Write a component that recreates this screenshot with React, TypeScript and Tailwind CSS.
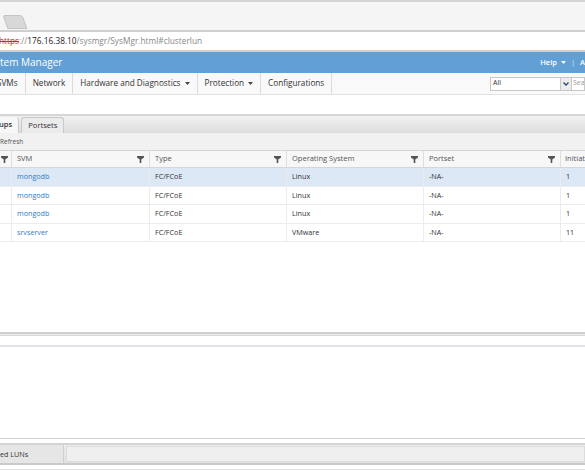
import React from 'react';

const font = { fontFamily: '"Open Sans", "Noto Sans", sans-serif' };

const Filter = () => (
  <svg width="7" height="7" viewBox="0 0 7 7" className="shrink-0">
    <path d="M0 0 H7 V1.5 L4.3 3.5 V7 H2.7 V3.5 L0 1.5 Z" fill="#555" />
  </svg>
);

const Caret = ({ color = '#444' }: { color?: string }) => (
  <svg width="5" height="3" viewBox="0 0 5 3" className="ml-[4px] inline-block">
    <path d="M0 0 H5 L2.5 3 Z" fill={color} />
  </svg>
);

const rows = [
  { svm: 'mongodb', os: 'Linux', init: '1', selected: true },
  { svm: 'mongodb', os: 'Linux', init: '1' },
  { svm: 'mongodb', os: 'Linux', init: '1' },
  { svm: 'srvserver', os: 'VMware', init: '11' },
];

const cols = [
  { label: '', w: 'w-[12px]' },
  { label: 'SVM', w: 'w-[138px]' },
  { label: 'Type', w: 'w-[137px]' },
  { label: 'Operating System', w: 'w-[137px]' },
  { label: 'Portset', w: 'w-[137px]' },
];

const navItems = ['Network', 'Hardware and Diagnostics', 'Protection', 'Configurations'];

export default function App() {
  return (
    <div className="w-[585px] h-[470px] overflow-hidden bg-white flex flex-col text-[#333]" style={font}>
      {/* browser tab strip */}
      <div className="h-[32px] shrink-0 bg-[#f5f5f5] border-t-2 border-[#d4d4d4] border-b-2 border-b-[#cfcfcf] flex items-end">
        <div className="ml-[5px] w-[20px] h-[14px] bg-[#d8d8d8] border border-[#c4c4c4] rounded-t-[3px] skew-x-[20deg] mb-[1px]" />
      </div>
      {/* address bar */}
      <div className="h-[20px] shrink-0 bg-white border-b-2 border-[#d0d0d0] flex items-center text-[8.3px] leading-none whitespace-nowrap">
        <span className="text-[#c62828] line-through -ml-[1px]">https</span>
        <span className="text-[#888]">://</span>
        <span className="text-[#222]">176.16.38.10</span>
        <span className="text-[#888]">/sysmgr/SysMgr.html#clusterlun</span>
      </div>
      {/* blue header */}
      <div className="h-[21px] shrink-0 bg-[#629fd5] flex items-center justify-between text-white whitespace-nowrap">
        <span className="text-[10px]">tem Manager</span>
        <div className="flex items-center text-[7.5px] font-semibold">
          <span>Help</span>
          <Caret color="#fff" />
          <span className="mx-[5px] font-normal text-[#dbe8f5]">|</span>
          <span>A</span>
        </div>
      </div>
      {/* nav bar */}
      <div className="h-[22px] shrink-0 bg-[#f9f9f9] border-b border-[#e2e2e2] flex items-stretch text-[8.2px] whitespace-nowrap">
        <div className="flex items-center pr-[7px] border-r border-[#dcdcdc] -ml-[3px]">SVMs</div>
        {navItems.map((n, i) => (
          <div key={n} className="flex items-center px-[7px] border-r border-[#dcdcdc] last:border-r-0">
            {n}
            {(i === 1 || i === 2) && <Caret />}
          </div>
        ))}
        <div className="flex-1" />
        <div className="flex items-center">
          <div className="w-[82px] h-[14px] border border-[#c8c8c8] bg-white flex items-center text-[7px]">
            <span className="flex-1 pl-[2px]">All</span>
            <div className="w-[11px] h-full bg-[#ececec] border-l border-[#c8c8c8] flex items-center justify-center">
              <svg width="6" height="4" viewBox="0 0 6 4">
                <path d="M0.5 0.5 L3 3 L5.5 0.5" stroke="#2b4a7a" strokeWidth="1.3" fill="none" />
              </svg>
            </div>
          </div>
          <div className="w-[13px] h-[14px] border border-l-0 border-[#c8c8c8] bg-white text-[7px] text-[#999] flex items-center pl-[1px] overflow-hidden">Sea</div>
        </div>
      </div>
      <div className="h-[19px] shrink-0 bg-white" />
      {/* tabs */}
      <div className="h-[19px] shrink-0 border-t-2 border-[#d6d6d6] bg-gradient-to-b from-[#f1f1f1] to-[#dedede] flex items-end text-[7.6px] whitespace-nowrap">
        <div className="h-[16px] pr-[6px] bg-[#f7f7f7] border-r border-[#c8c8c8] flex items-center font-semibold -ml-[1px] rounded-tr-[3px]">ups</div>
        <div className="h-[16px] ml-[2px] px-[6px] bg-[#ebebeb] border border-b-0 border-[#c8c8c8] rounded-t-[3px] flex items-center">Portsets</div>
      </div>
      {/* toolbar */}
      <div className="h-[18px] shrink-0 bg-[#f1f1f1] border-b border-[#d4d4d4] flex items-center text-[6.5px] text-[#555] whitespace-nowrap">
        <span>Refresh</span>
      </div>
      {/* table header */}
      <div className="h-[17px] shrink-0 bg-[#f7f7f7] border-b border-[#d6d6d6] flex text-[7.5px] text-[#555] whitespace-nowrap">
        {cols.map((c, i) => (
          <div key={i} className={`${c.w} shrink-0 flex items-center justify-between ${i === 0 ? 'pr-[3px] justify-end' : 'px-[5px]'} border-r border-[#dedede]`}>
            {c.label && <span>{c.label}</span>}
            <Filter />
          </div>
        ))}
        <div className="flex items-center px-[4px]">Initiato</div>
      </div>
      {/* rows */}
      {rows.map((r, i) => (
        <div key={i} className={`h-[18.5px] shrink-0 flex text-[7.2px] whitespace-nowrap border-b border-[#ececec] ${r.selected ? 'bg-[#dde8f7]' : 'bg-white'}`}>
          <div className="w-[12px] shrink-0 border-r border-[#ececec]" />
          <div className="w-[138px] shrink-0 flex items-center px-[5px] text-[#2f7ac6] border-r border-[#ececec]">{r.svm}</div>
          <div className="w-[137px] shrink-0 flex items-center px-[5px] border-r border-[#ececec]">FC/FCoE</div>
          <div className="w-[137px] shrink-0 flex items-center px-[5px] border-r border-[#ececec]">{r.os}</div>
          <div className="w-[137px] shrink-0 flex items-center px-[5px] border-r border-[#ececec]">-NA-</div>
          <div className="flex items-center px-[5px]">{r.init}</div>
        </div>
      ))}
      <div className="flex-1 bg-white" />
      {/* splitter */}
      <div className="h-[4px] shrink-0 border-t-2 border-[#cfcfcf] border-b border-b-[#d8d8d8] bg-[#ececec]" />
      <div className="h-[11px] shrink-0 bg-white border-b-2 border-[#e2e2e8]" />
      {/* detail area */}
      <div className="h-[92px] shrink-0 bg-white border-b border-[#d0d0d0]" />
      <div className="h-[6px] shrink-0 bg-white border-b-2 border-[#d4d4d4]" />
      {/* bottom tabs */}
      <div className="h-[18px] shrink-0 bg-gradient-to-b from-[#ececec] to-[#e2e2e2] flex text-[7.2px] whitespace-nowrap">
        <div className="w-[64px] shrink-0 bg-[#e6e6e6] border-r border-[#cfcfcf] flex items-center">ed LUNs</div>
        <div className="flex-1 ml-[2px] my-[1px] bg-[#efefef] border border-[#dcdcdc]" />
      </div>
      <div className="h-[7px] shrink-0 border-t-2 border-[#cacaca] bg-white border-b border-b-[#e0e0e0]" />
    </div>
  );
}
